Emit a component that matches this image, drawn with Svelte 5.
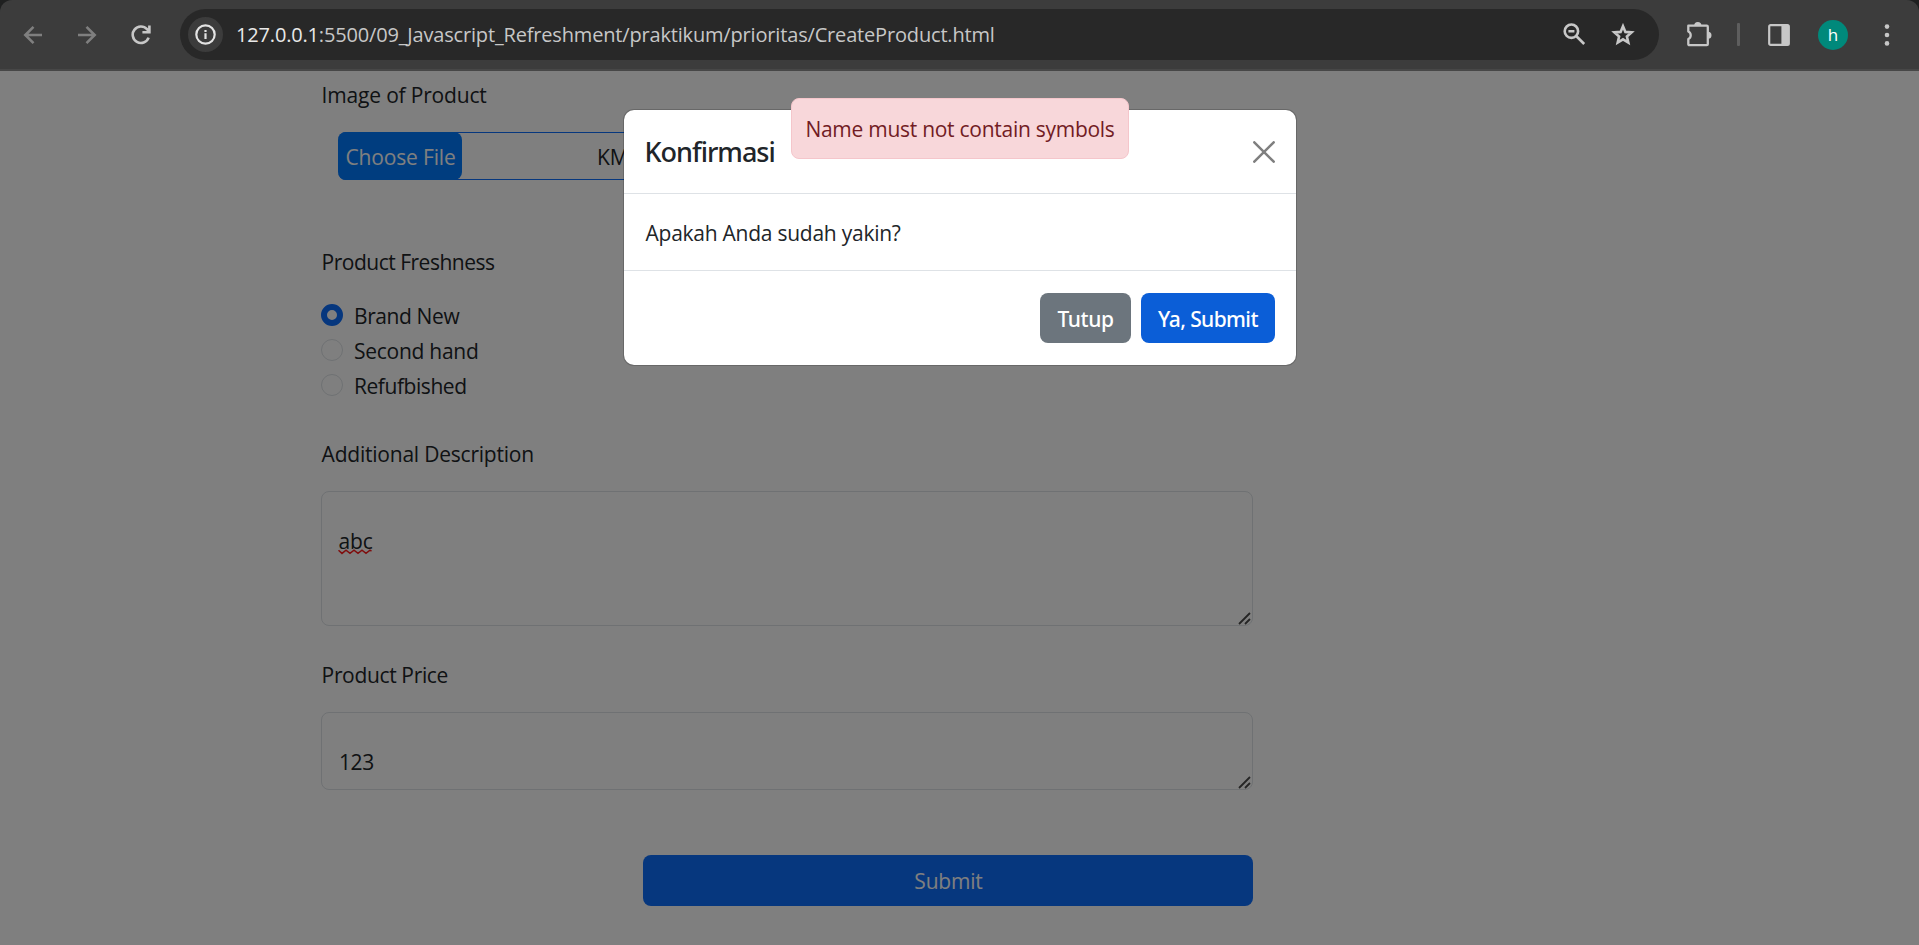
<script>
  const url = { host: '127.0.0.1', path: ':5500/09_Javascript_Refreshment/praktikum/prioritas/CreateProduct.html' };
  const freshness = [
    { label: 'Brand New', spacing: -0.4 },
    { label: 'Second hand', spacing: -0.27 },
    { label: 'Refufbished', spacing: -0.44 }
  ];
  let selected = $state('Brand New');
</script>

<div class="window">
  <header class="toolbar">
    <nav>
      <svg class="dim" width="20" height="20" viewBox="0 0 20 20"><path d="M19 10H2.5M10.5 1.8 2.3 10l8.2 8.2" /></svg>
      <svg class="dim" width="20" height="20" viewBox="0 0 20 20"><path d="M1 10h16.5M9.5 1.8 17.7 10l-8.2 8.2" /></svg>
      <svg class="reload" width="20" height="20" viewBox="0 0 20 20"><path d="M17.6 12.6A8.2 8.2 0 1 1 16 4.2l2.2 2.4M11.4 7.2H18.4V.6" /></svg>
    </nav>
    <div class="omnibox">
      <span class="site">
        <svg width="21" height="21" viewBox="0 0 21 21"><circle cx="10.5" cy="10.5" r="9.2" fill="none" stroke="#e3e3e3" stroke-width="2.2" /><path d="M10.5 9.3v5.8M10.5 5.9v2.1" stroke="#e3e3e3" stroke-width="2.2" fill="none" /></svg>
      </span>
      <span class="url"><b>{url.host}</b>{url.path}</span>
      <svg class="mag" width="23" height="23" viewBox="0 0 23 23"><circle cx="8.4" cy="8.2" r="6.7" /><path d="M13.2 13l8 8M5.4 8.2h6" /></svg>
      <svg class="star" width="24" height="23" viewBox="0 0 24 23"><path d="M12 3.2l2.4 5.7 6.2.5-4.7 4.1 1.4 6L12 16.3l-5.3 3.2 1.4-6-4.7-4.1 6.2-.5z" /></svg>
    </div>
    <div class="actions">
      <svg width="26" height="27" viewBox="0 0 26 27"><path d="M2.3 4.7h18.5a1 1 0 0 1 1 1v17.5a1 1 0 0 1-1 1H3.3a1 1 0 0 1-1-1v-5.1a4.2 4.2 0 0 0 0-7.6z" fill="none" stroke="#c7c7c7" stroke-width="2.3" stroke-linejoin="round" /><path d="M8.2 4.5a3.6 3.6 0 0 1 7.2 0zM22 10.7a3.5 3.5 0 0 1 0 7z" fill="#c7c7c7" /></svg>
      <i class="bar"></i>
      <svg class="panel" width="22" height="22" viewBox="0 0 22 22"><rect x="1.2" y="1.2" width="19.6" height="19.6" rx="1.4" fill="none" stroke="#c7c7c7" stroke-width="2.2" /><path d="M13.4 1h7.4v20h-7.4z" fill="#c7c7c7" /></svg>
      <span class="avatar">h</span>
      <svg class="dots" width="6" height="22" viewBox="0 0 6 22"><g fill="#c7c7c7"><circle cx="3" cy="2.6" r="2.3" /><circle cx="3" cy="11" r="2.3" /><circle cx="3" cy="19.4" r="2.3" /></g></svg>
    </div>
  </header>

  <main>
    <form>
      <div class="label first">Image of Product</div>
      <div class="file"><span class="choose">Choose File</span><span class="filename">KM</span></div>

      <div class="label fresh">Product Freshness</div>
      {#each freshness as item}
        <label class="option">
          <input type="radio" bind:group={selected} value={item.label} />
          <span style="letter-spacing: {item.spacing}px">{item.label}</span>
        </label>
      {/each}

      <div class="label desc">Additional Description</div>
      <div class="area tall">
        <span class="typo">abc<svg width="34" height="6" viewBox="0 0 34 6"><path d="M.5 1.2 4 4.4 8 1.2l4 3.2 4-3.2 4 3.2 4-3.2 4 3.2 4-3.2 1.5 1" fill="none" stroke="#ff1c1c" stroke-width="1.5" /></svg></span>
        <svg class="grip" width="13" height="13" viewBox="0 0 13 13"><path d="M1 12 12 1M7 12l5-5" /></svg>
      </div>

      <div class="label price">Product Price</div>
      <div class="area short">
        <span class="num">123</span>
        <svg class="grip" width="13" height="13" viewBox="0 0 13 13"><path d="M1 12 12 1M7 12l5-5" /></svg>
      </div>

      <button type="button" class="submit">Submit</button>
    </form>

    <div class="backdrop">
      <section class="modal">
        <div class="head">
          <h5>Konfirmasi</h5>
          <svg width="22" height="22" viewBox="0 0 22 22"><path d="M1.3 1.3l19.4 19.4M20.7 1.3L1.3 20.7" stroke="#7f7f7f" stroke-width="2.5" stroke-linecap="round" /></svg>
        </div>
        <div class="body">Apakah Anda sudah yakin?</div>
        <div class="foot">
          <button type="button" class="grey">Tutup</button>
          <button type="button" class="blue">Ya, Submit</button>
        </div>
      </section>
      <div class="alert">Name must not contain symbols</div>
    </div>
  </main>
</div>

<style>
  :global(body) { margin: 0; background: #1f2020; }
  * { box-sizing: border-box; }
  .window {
    width: 1919px; height: 945px; overflow: hidden;
    display: flex; flex-direction: column;
    background: #1f2020;
    font: 400 21px/32px 'Open Sans', sans-serif; color: #212529;
  }
  svg { display: block; flex: none; }
  button { font: inherit; border: 0; padding: 0; }

  .toolbar {
    height: 71px; flex: none; display: flex; align-items: center;
    background: #3c3c3c; border-bottom: 2px solid #474747;
    border-radius: 12px 12px 0 0;
  }
  nav { display: flex; gap: 34px; padding-left: 23px; width: 180px; }
  nav path { fill: none; stroke-width: 2.6; stroke: #c7c7c7; }
  nav .dim path { stroke: #7f7f7f; }
  .omnibox {
    width: 1479px; height: 51px; border-radius: 26px; background: #282828;
    display: flex; align-items: center; padding-left: 8px;
  }
  .site {
    width: 35px; height: 35px; border-radius: 50%; background: #3c3c3c;
    display: flex; align-items: center; justify-content: center;
  }
  .url { width: 1340px; padding-left: 13px; font-size: 20px; letter-spacing: -0.17px; color: #c7c7c7; white-space: nowrap; }
  .url b { font-weight: 400; color: #e9e9e9; }
  .mag, .star { fill: none; stroke: #c7c7c7; stroke-width: 2.6; }
  .mag { margin-right: 25px; }
  .actions { display: flex; align-items: center; padding-left: 27px; }
  .bar { width: 3px; height: 23px; background: #5e5e5e; border-radius: 1px; margin: 0 28px 0 25px; }
  .avatar {
    width: 30px; height: 30px; border-radius: 50%; background: #00897b; color: #fff;
    font-size: 17px; line-height: 30px; text-align: center; margin: 0 36px 0 28px;
  }

  main { flex: 1; position: relative; background: #fff; }
  form { width: 1253px; padding-left: 321px; display: flex; flex-direction: column; }
  .label { height: 32px; white-space: nowrap; padding-left: 0.6px; }
  .first { margin-top: 8px; letter-spacing: -0.18px; }
  .fresh { margin: 66px 0 20px; letter-spacing: -0.5px; }
  .desc { margin-top: 35px; letter-spacing: -0.22px; }
  .price { margin-top: 33px; letter-spacing: -0.35px; }
  .file {
    height: 48px; margin: 21px 0 0 17px; width: 600px; display: flex;
    border: 1px solid #0d6efd; border-left: 0; border-radius: 8px;
  }
  .choose {
    width: 124px; height: 48px; margin-top: -1px; border-radius: 8px; background: #007bff; color: #fff;
    text-align: center; line-height: 50px; letter-spacing: -0.15px; padding-left: 1px;
  }
  .filename { margin-left: 135px; line-height: 49px; width: 27px; height: 46px; overflow: hidden; }
  .option { height: 35px; line-height: 35px; display: flex; align-items: center; gap: 10px; }
  .option span { padding: 1px 0 0 1px; }
  input {
    appearance: none; width: 22px; height: 22px; margin: 0 0 1px; border-radius: 50%;
    border: 1px solid #dee2e6; background: #fff;
  }
  input:checked { border: 6px solid #0d6efd; }
  .area {
    border: 1px solid #dee2e6; border-radius: 8px; margin-top: 21px;
    padding: 33px 0 0 16px; position: relative;
  }
  .tall { height: 135px; }
  .short { height: 78px; }
  .num { letter-spacing: -0.4px; padding-left: 1px; }
  .typo { position: relative; letter-spacing: -0.1px; padding-left: 0.5px; }
  .typo svg { position: absolute; left: 0; top: 22px; }
  .grip { position: absolute; right: 1px; bottom: 0; }
  .grip path { stroke: #4a4a4a; stroke-width: 1.8; }
  .submit {
    align-self: flex-end; width: 610px; height: 51px; margin-top: 65px; padding-left: 1px;
    border-radius: 8px; background: #0d6efd; color: #fff; letter-spacing: -0.2px;
  }

  .backdrop {
    position: absolute; inset: 0; background: rgba(0, 0, 0, 0.5);
    display: flex; justify-content: center; align-items: flex-start;
  }
  .modal {
    width: 674px; margin-top: 38px; border: 1px solid rgba(0, 0, 0, 0.175);
    border-radius: 11px; background: #fff; background-clip: padding-box;
  }
  .head {
    height: 84px; display: flex; align-items: center; justify-content: space-between;
    padding: 0 21px; border-bottom: 1px solid #dee2e6;
  }
  h5 { margin: 0; font: 500 27px/40px 'Noto Sans', sans-serif; letter-spacing: -1px; }
  .body { height: 76px; padding: 23px 21px 0 22px; letter-spacing: -0.25px; }
  .foot {
    height: 95px; border-top: 1px solid #dee2e6; padding: 0 21px;
    display: flex; align-items: center; justify-content: flex-end; gap: 10px;
  }
  .foot button { height: 50px; border-radius: 8px; color: #fff; font-family: 'Noto Sans', sans-serif; font-weight: 500; padding: 2px 0 0 1px; }
  .grey { width: 91px; background: #6c757d; letter-spacing: -0.4px; }
  .blue { width: 134px; background: #0b5ed7; letter-spacing: -0.6px; }
  .alert {
    position: absolute; top: 27px; left: 791px; width: 338px; height: 61px;
    border: 1px solid #f5c6cb; border-radius: 8px; background: #f8d7da; color: #721c24;
    line-height: 61px; text-align: center; letter-spacing: -0.27px; white-space: nowrap;
  }
</style>
